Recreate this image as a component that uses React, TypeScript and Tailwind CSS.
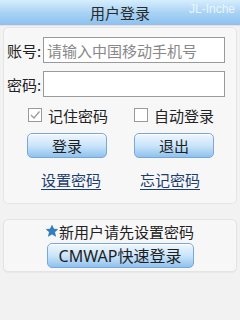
import React from "react";

const font = { fontFamily: '"Noto Sans CJK SC", "Noto Sans", sans-serif' };

function Btn({ children, w }: { children: React.ReactNode; w: string }) {
  return (
    <div
      className={`${w} h-[25px] rounded-[5px] border border-[#7aa7d6] bg-gradient-to-b from-[#eef7fe] via-[#cbe5fa] to-[#8fc2ee] flex items-center justify-center text-[15px] text-[#1e1e1e] leading-none shadow-[inset_0_1px_0_#ffffff]`}
    >
      {children}
    </div>
  );
}

function Check({ checked }: { checked?: boolean }) {
  return (
    <div className="w-[14px] h-[14px] border border-[#9a9a9a] bg-white flex items-center justify-center">
      {checked && (
        <svg width="12" height="12" viewBox="0 0 12 12">
          <path d="M2 6 L5 9 L10.5 2.5" stroke="#9a9a9a" strokeWidth="1.3" fill="none" />
        </svg>
      )}
    </div>
  );
}

export default function App() {
  return (
    <div className="w-[240px] h-[320px] bg-[#f2f2f2] overflow-hidden" style={font}>
      <div className="relative h-[26px] bg-gradient-to-b from-[#d6eefc] via-[#a9d3f4] to-[#8cc1ee] flex items-center justify-center border-b border-[#f0dcdc]">
        <span className="text-[15px] text-[#2a2a2a] leading-none">用户登录</span>
        <span className="absolute right-[5px] top-[3px] text-[12px] text-[#eaf5ff] leading-none" style={{ fontFamily: '"Liberation Sans", Arial, sans-serif' }}>
          JL-Inche
        </span>
      </div>
      <div className="mx-[3px] mt-[1px] h-[177px] rounded-[5px] border border-[#e4e4e4] bg-[#f7f7f7] pt-[9px]">
        <div className="flex items-center h-[26px]">
          <span className="w-[39px] pl-[3px] text-[15px] text-[#222] leading-none">账号:</span>
          <div className="w-[182px] h-[26px] border border-[#9a9a9a] bg-white flex items-center pl-[3px] text-[15px] text-[#888] leading-none">
            请输入中国移动手机号
          </div>
        </div>
        <div className="flex items-center h-[26px] mt-[8px]">
          <span className="w-[39px] pl-[3px] text-[15px] text-[#222] leading-none">密码:</span>
          <div className="w-[182px] h-[26px] border border-[#9a9a9a] bg-white" />
        </div>
        <div className="flex items-center h-[18px] mt-[9px]">
          <div className="flex items-center w-[130px] pl-[24px] gap-[6px]">
            <Check checked />
            <span className="text-[15px] text-[#222] leading-none">记住密码</span>
          </div>
          <div className="flex items-center gap-[6px]">
            <Check />
            <span className="text-[15px] text-[#222] leading-none">自动登录</span>
          </div>
        </div>
        <div className="flex items-center mt-[9px] pl-[23px] gap-[27px]">
          <Btn w="w-[80px]">登录</Btn>
          <Btn w="w-[80px]">退出</Btn>
        </div>
        <div className="flex items-center mt-[10px] h-[22px] pl-[37px] gap-[39px]">
          <span className="text-[15px] text-[#1c3d6f] underline underline-offset-[3px] leading-none">设置密码</span>
          <span className="text-[15px] text-[#1c3d6f] underline underline-offset-[3px] leading-none">忘记密码</span>
        </div>
      </div>
      <div className="mx-[3px] mt-[15px] h-[53px] rounded-[5px] border border-[#e4e4e4] bg-[#f7f7f7] flex flex-col items-center shadow-[0_1px_1px_#e8e8e8]">
        <div className="flex items-center h-[20px] mt-[1px]">
          <svg width="12" height="12" viewBox="0 0 12 12" className="mr-[1px]">
            <path d="M6 0.3 L7.7 4.1 L11.7 4.4 L8.6 7.1 L9.6 11.3 L6 9.1 L2.4 11.3 L3.4 7.1 L0.3 4.4 L4.3 4.1 Z" fill="#2e7fc4" stroke="#1f5f9a" strokeWidth="0.5" />
          </svg>
          <span className="text-[15px] text-[#222] leading-none">新用户请先设置密码</span>
        </div>
        <div className="mt-[2px]">
          <Btn w="w-[147px]">
            <span className="text-[16px]" style={{ fontFamily: '"Noto Sans", "Noto Sans CJK SC", sans-serif' }}>CMWAP快速登录</span>
          </Btn>
        </div>
      </div>
    </div>
  );
}
